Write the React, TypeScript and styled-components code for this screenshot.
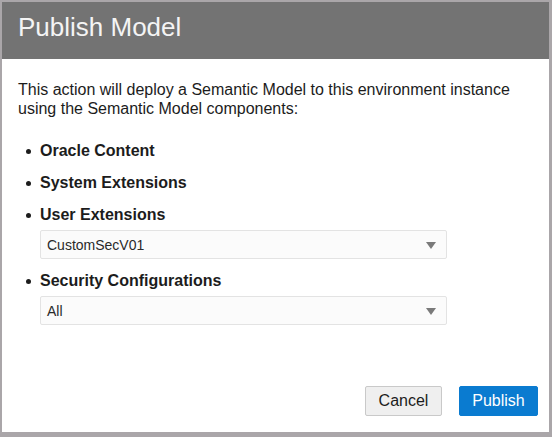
import { createGlobalStyle, styled } from 'styled-components'

const GlobalStyle = createGlobalStyle`
  html, body {
    margin: 0;
    padding: 0;
    background: #ffffff;
  }
  body {
    font-family: 'Liberation Sans', Arial, Helvetica, sans-serif;
    color: #161616;
  }
`

const components = [
  { label: 'Oracle Content' },
  { label: 'System Extensions' },
  { label: 'User Extensions', value: 'CustomSecV01' },
  { label: 'Security Configurations', value: 'All' },
]

export default function App() {
  return (
    <>
      <GlobalStyle />
      <Dialog>
        <TitleBar>
          <Title>Publish Model</Title>
        </TitleBar>
        <Body>
          <Intro>
            This action will deploy a Semantic Model to this environment instance
            using the Semantic Model components:
          </Intro>
          <List>
            {components.map((c) => (
              <Item key={c.label}>
                <ItemLabel>{c.label}</ItemLabel>
                {c.value && (
                  <Select>
                    <span>{c.value}</span>
                    <Caret />
                  </Select>
                )}
              </Item>
            ))}
          </List>
        </Body>
        <Footer>
          <Button $width={77}>Cancel</Button>
          <Button $width={79} $primary>
            Publish
          </Button>
        </Footer>
      </Dialog>
    </>
  )
}

const Dialog = styled.div`
  box-sizing: border-box;
  width: 552px;
  height: 437px;
  border: 2px solid #aaa6a9;
  border-right-width: 3px;
  border-bottom-width: 5px;
  display: flex;
  flex-direction: column;
  background: #fff;
`

const TitleBar = styled.div`
  height: 57px;
  background: #737373;
  display: flex;
  align-items: center;
  padding-left: 16px;
`

const Title = styled.h1`
  margin: -7px 0 0 0;
  font-size: 26px;
  font-weight: 300;
  color: #f4f4f4;
`

const Body = styled.div`
  flex: 1;
  padding: 21px 16px 0 16px;
`

const Intro = styled.p`
  margin: 0;
  font-size: 16px;
  line-height: 19px;
  color: #1c1c1c;
`

const List = styled.ul`
  margin: 23px 0 0 0;
  padding: 0 0 0 22px;
  list-style: none;
`

const Item = styled.li`
  position: relative;
  margin-bottom: 12px;
  &::before {
    content: '';
    position: absolute;
    left: -14px;
    top: 8px;
    width: 5px;
    height: 5px;
    border-radius: 50%;
    background: #1c1c1c;
  }
`

const ItemLabel = styled.div`
  font-size: 16px;
  font-weight: 700;
  line-height: 20px;
  color: #1c1c1c;
`

const Select = styled.div`
  box-sizing: border-box;
  margin-top: 5px;
  width: 407px;
  height: 29px;
  border: 1px solid #e3e3e3;
  border-radius: 2px;
  background: #fbfbfb;
  display: flex;
  align-items: center;
  justify-content: space-between;
  padding: 0 10px 0 6px;
  font-size: 14px;
  color: #2a2a2a;
`

const Caret = styled.span`
  width: 0;
  height: 0;
  border-left: 5px solid transparent;
  border-right: 5px solid transparent;
  border-top: 7px solid #7a7a7a;
  margin-top: 2px;
`

const Footer = styled.div`
  display: flex;
  justify-content: flex-end;
  gap: 17px;
  padding: 0 11px 16px 0;
`

const Button = styled.button<{ $primary?: boolean; $width: number }>`
  box-sizing: border-box;
  width: ${(p) => p.$width}px;
  height: 30px;
  padding: 0;
  border-radius: 2px;
  font-family: 'Liberation Sans', Arial, Helvetica, sans-serif;
  font-size: 16px;
  cursor: pointer;
  border: 1px solid ${(p) => (p.$primary ? '#0a7bd0' : '#c9c9c9')};
  background: ${(p) => (p.$primary ? '#0a7bd0' : '#efefef')};
  color: ${(p) => (p.$primary ? '#ffffff' : '#1c1c1c')};
`
